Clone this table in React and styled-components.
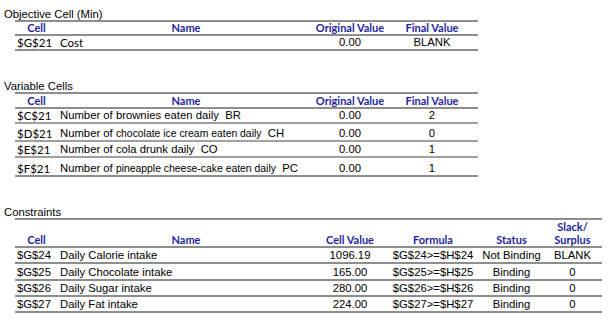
import React from "react";
import styled, { createGlobalStyle } from "styled-components";

const Global = createGlobalStyle`
  html, body { margin: 0; padding: 0; background: #fff; }
  body { font-family: "Liberation Sans", Arial, sans-serif; color: #000; }
`;

const Page = styled.div`
  padding: 8px 0 0 4px;
  width: 609px;
  height: 324px;
  box-sizing: border-box;
`;

const Section = styled.section`
  margin-bottom: ${(p) => p.$gap || 0}px;
`;

const Title = styled.div`
  font-family: "Liberation Sans", Arial, sans-serif;
  font-size: 11.3px;
  height: 12px;
  line-height: 12px;
  white-space: nowrap;
`;

const Table = styled.div`
  margin-left: 11px;
  width: ${(p) => p.$width}px;
  border-top: 2px solid #8e8e8e;
`;

const Row = styled.div`
  display: grid;
  grid-template-columns: ${(p) => p.$cols};
  height: ${(p) => p.$h}px;
  border-bottom: 2px solid ${(p) => (p.$light ? "#a0a0a0" : "#8e8e8e")};
  align-items: end;
`;

const Head = styled.div`
  font-family: Lato, "Open Sans", sans-serif;
  font-weight: 700;
  font-size: 11px;
  line-height: 12.5px;
  color: #1f1fa0;
  text-align: center;
  white-space: nowrap;
  padding-bottom: 0px;
`;

const Cell = styled.div`
  font-family: ${(p) =>
    p.$calibri ? 'Lato, "Open Sans", sans-serif' : '"Liberation Sans", Arial, sans-serif'};
  font-size: ${(p) => (p.$calibri ? "11.5px" : "11.3px")};
  line-height: 13px;
  text-align: ${(p) => p.$align || "left"};
  padding-left: ${(p) => (p.$align === "center" ? 0 : 2)}px;
  white-space: nowrap;
  overflow: visible;
`;

const Small = styled.span`
  font-size: 10.4px;
`;

const COLS1 = "43px 256px 72px 92px";
const COLS2 = "43px 256px 72px 94px 63px 59px";

const variables = [
  { cell: "$C$21", name: <>Number of brownies eaten daily&nbsp; BR</>, h: 13 },
  {
    cell: "$D$21",
    name: (
      <>
        Number of <Small>chocolate ice cream eaten daily</Small>&nbsp; CH
      </>
    ),
    h: 16,
    fin: "0",
  },
  { cell: "$E$21", name: <>Number of cola drunk daily&nbsp; CO</>, h: 14, fin: "1" },
  {
    cell: "$F$21",
    name: (
      <>
        Number of <Small>pineapple cheese-cake eaten daily</Small>&nbsp; PC
      </>
    ),
    h: 17,
    fin: "1",
  },
];
variables[0].fin = "2";

const constraints = [
  ["$G$24", "Daily Calorie intake", "1096.19", "$G$24>=$H$24", "Not Binding", "BLANK"],
  ["$G$25", "Daily Chocolate intake", "165.00", "$G$25>=$H$25", "Binding", "0"],
  ["$G$26", "Daily Sugar intake", "280.00", "$G$26>=$H$26", "Binding", "0"],
  ["$G$27", "Daily Fat intake", "224.00", "$G$27>=$H$27", "Binding", "0"],
];

export default function App() {
  return (
    <>
      <Global />
      <Page>
        <Section $gap={29}>
          <Title>Objective Cell (Min)</Title>
          <Table $width={463}>
            <Row $cols={COLS1} $h={12}>
              <Head>Cell</Head>
              <Head>Name</Head>
              <Head>Original Value</Head>
              <Head>Final Value</Head>
            </Row>
            <Row $cols={COLS1} $h={13}>
              <Cell $calibri>$G$21</Cell>
              <Cell $calibri>Cost</Cell>
              <Cell $align="center">0.00</Cell>
              <Cell $align="center">BLANK</Cell>
            </Row>
          </Table>
        </Section>

        <Section $gap={29}>
          <Title>Variable Cells</Title>
          <Table $width={463}>
            <Row $cols={COLS1} $h={13}>
              <Head>Cell</Head>
              <Head>Name</Head>
              <Head>Original Value</Head>
              <Head>Final Value</Head>
            </Row>
            {variables.map((v, i) => (
              <Row key={v.cell} $cols={COLS1} $h={v.h} $light={i < 3}>
                <Cell $calibri>{v.cell}</Cell>
                <Cell>{v.name}</Cell>
                <Cell $align="center">0.00</Cell>
                <Cell $align="center">{v.fin}</Cell>
              </Row>
            ))}
          </Table>
        </Section>

        <Section>
          <Title>Constraints</Title>
          <Table $width={587}>
            <Row $cols={COLS2} $h={26}>
              <Head>Cell</Head>
              <Head>Name</Head>
              <Head>Cell Value</Head>
              <Head>Formula</Head>
              <Head>Status</Head>
              <Head>
                Slack/
                <br />
                Surplus
              </Head>
            </Row>
            {constraints.map((c) => (
              <Row key={c[0]} $cols={COLS2} $h={14.3}>
                <Cell>{c[0]}</Cell>
                <Cell>{c[1]}</Cell>
                <Cell $align="center">{c[2]}</Cell>
                <Cell $align="center">{c[3]}</Cell>
                <Cell $align="center">{c[4]}</Cell>
                <Cell $align="center">{c[5]}</Cell>
              </Row>
            ))}
          </Table>
        </Section>
      </Page>
    </>
  );
}
